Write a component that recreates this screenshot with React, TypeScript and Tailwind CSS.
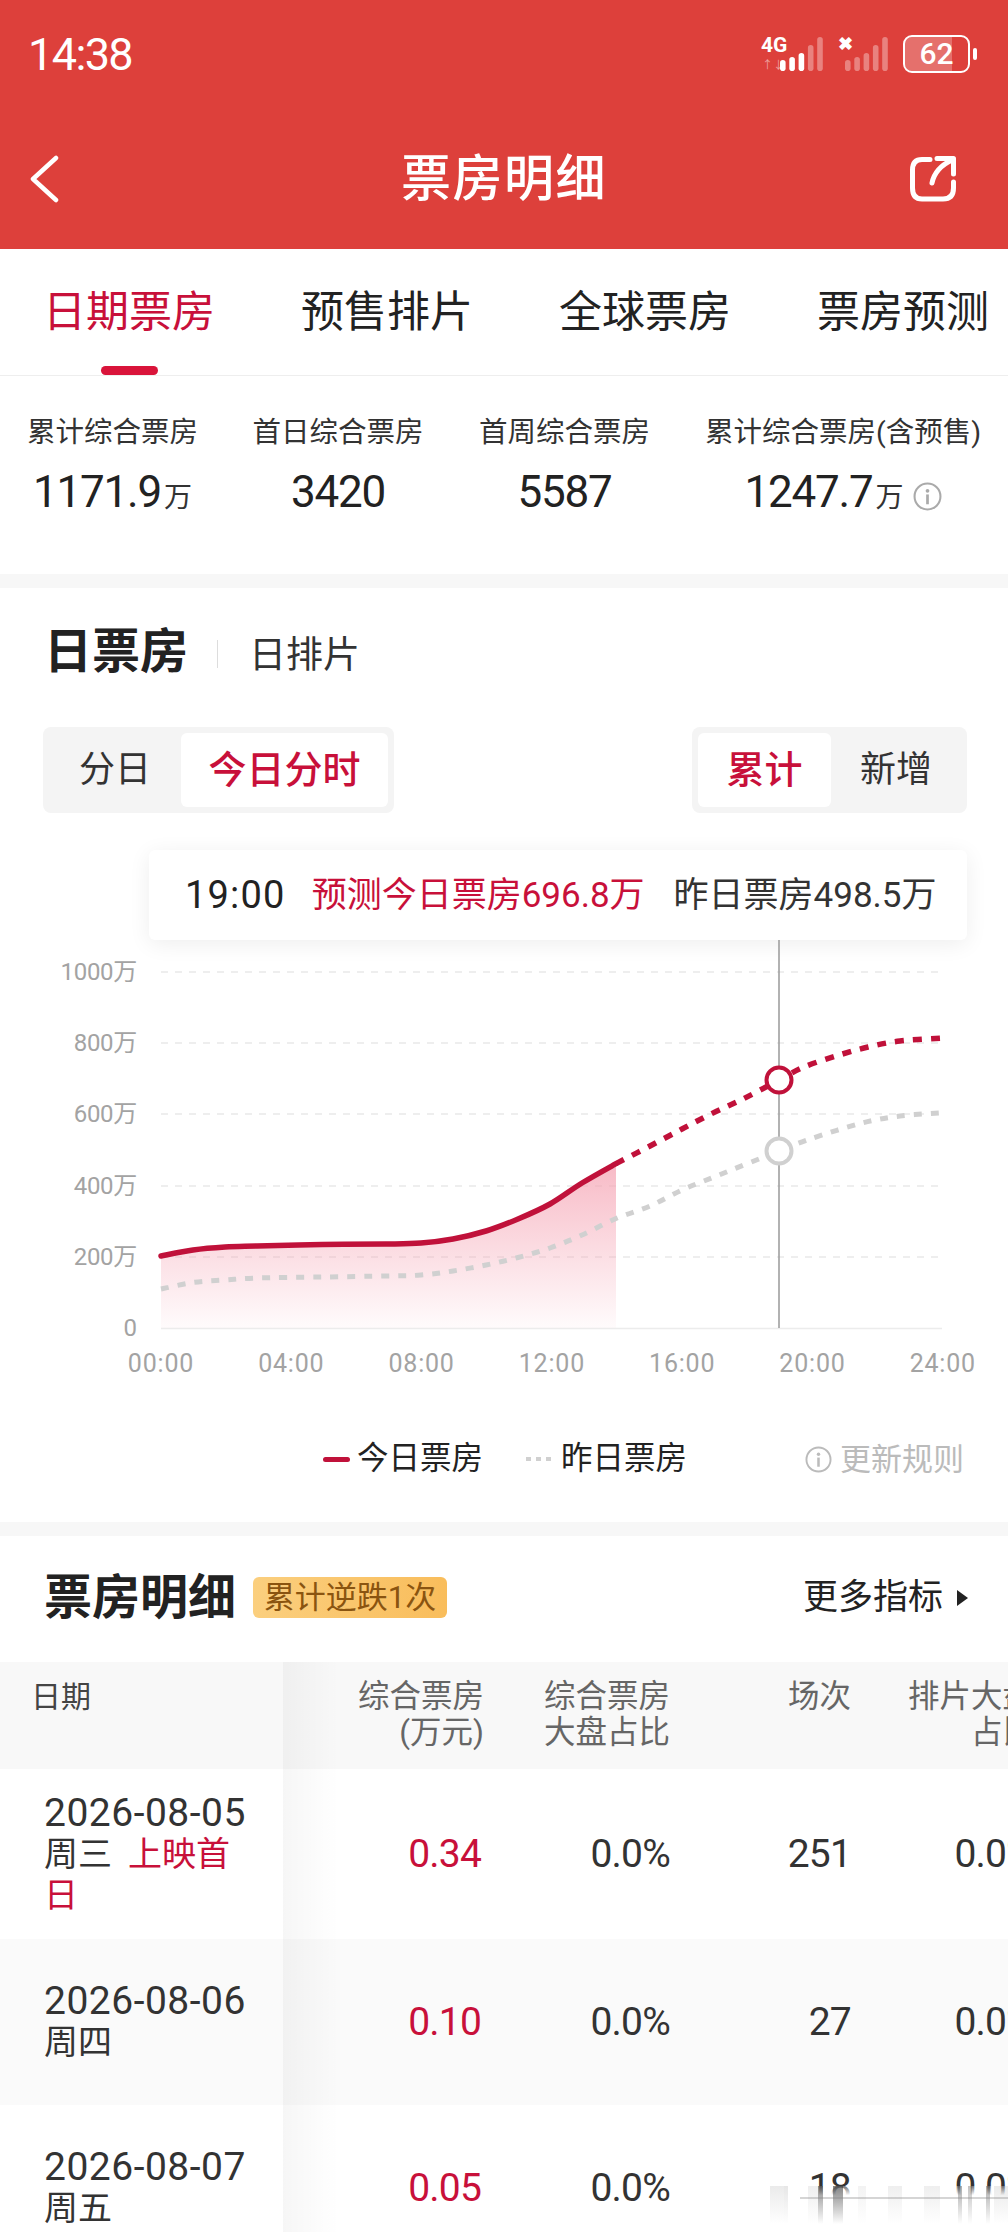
type Pt = [number, number];

const todayReal: Pt[] = [
  [161, 1256], [193, 1250], [225, 1247], [257, 1246], [322, 1244.5], [386, 1244], [421, 1243],
  [453, 1239], [486, 1231], [518, 1219], [550, 1204], [582, 1183], [616, 1163.6],
];
const todayForecast: Pt[] = [
  [616, 1163.6], [650, 1146], [682, 1129], [711, 1114], [743, 1099], [779, 1080], [804, 1067], [836, 1056],
  [868, 1047], [900, 1041], [942, 1038],
];
const yesterday: Pt[] = [
  [161, 1289], [193, 1282.5], [225, 1280], [257, 1278], [322, 1277], [386, 1276], [421, 1275],
  [453, 1271], [486, 1265], [518, 1257.5], [550, 1248], [582, 1235], [616, 1218.5], [650, 1206],
  [682, 1190], [714, 1177], [779, 1151], [810, 1139], [862, 1123], [900, 1116], [939, 1113],
];

const smooth = (pts: Pt[]) => {
  let d = `M${pts[0][0]} ${pts[0][1]}`;
  for (let i = 0; i < pts.length - 1; i++) {
    const p0 = pts[i - 1] ?? pts[i];
    const p1 = pts[i];
    const p2 = pts[i + 1];
    const p3 = pts[i + 2] ?? p2;
    const c1x = p1[0] + (p2[0] - p0[0]) / 6;
    const c1y = p1[1] + (p2[1] - p0[1]) / 6;
    const c2x = p2[0] - (p3[0] - p1[0]) / 6;
    const c2y = p2[1] - (p3[1] - p1[1]) / 6;
    d += ` C${c1x} ${c1y} ${c2x} ${c2y} ${p2[0]} ${p2[1]}`;
  }
  return d;
};

const barHeights = [11, 14, 18, 26, 34];

const Bars = ({ lit }: { lit: number }) => (
  <svg width="43" height="34" viewBox="0 0 43 34" className="block">
    {barHeights.map((h, i) => (
      <rect
        key={i}
        x={i * 9.3}
        y={34 - h}
        width="5.6"
        height={h}
        rx="2.8"
        fill="#fff"
        opacity={i < lit ? 1 : 0.35}
      />
    ))}
  </svg>
);

const StatusBar = () => (
  <div className="flex h-[108px] items-center justify-between pl-7 pr-[31px]">
    <span className="text-[45px] font-normal leading-none tracking-[-1.6px] text-white">14:38</span>
    <div className="flex items-center">
      <div className="relative h-[34px] w-[62px]">
        <span className="absolute left-0 top-[-2px] text-[21px] font-bold leading-none text-white">4G</span>
        <span className="absolute bottom-0 left-[1px] text-[11px] leading-none text-white/50">↑↓</span>
        <div className="absolute bottom-0 right-0">
          <Bars lit={3} />
        </div>
      </div>
      <div className="relative ml-[15px] h-[34px] w-[50px]">
        <span className="absolute left-0 top-[-2px] text-[18px] font-bold leading-none text-white">✖</span>
        <div className="absolute bottom-0 right-0">
          <Bars lit={0} />
        </div>
      </div>
      <div className="ml-[15px] flex items-center">
        <div className="relative flex h-[38px] w-[67px] items-center justify-center overflow-hidden rounded-[9px] border-2 border-white">
          <div className="absolute inset-y-0 left-0 w-[75%] bg-white/25" />
          <span className="relative text-[30px] font-medium leading-none text-white">62</span>
        </div>
        <div className="ml-[3px] h-[12px] w-[4px] rounded-full bg-white" />
      </div>
    </div>
  </div>
);

const NavBar = () => (
  <div className="grid h-[141px] grid-cols-[1fr_auto_1fr] items-center px-[29px]">
    <svg width="30" height="48" viewBox="0 0 30 48" fill="none" stroke="#fff" strokeWidth="4.5" strokeLinecap="round" strokeLinejoin="round">
      <path d="M27 3L4 24L27 45" />
    </svg>
    <h1 className="text-[50px] font-medium leading-none tracking-[1.5px] text-white">票房明细</h1>
    <svg
      width="46"
      height="46"
      viewBox="0 0 46 46"
      fill="none"
      stroke="#fff"
      strokeWidth="5"
      strokeLinecap="round"
      strokeLinejoin="round"
      className="mr-[23px] justify-self-end"
    >
      <path d="M20 3.5H12Q2.5 3.5 2.5 14V32Q2.5 43 12 43H33Q43.5 43 43.5 32V26" />
      <path d="M22 27Q25 12 42 4" />
      <path d="M27 2.5H43.5V18" />
    </svg>
  </div>
);

const tabs = ["日期票房", "预售排片", "全球票房", "票房预测"];

const Tabs = () => (
  <div className="grid h-[127px] w-[1033px] grid-cols-[repeat(4,258px)] border-b border-[#eee]">
    {tabs.map((t, i) => (
      <div key={t} className="relative flex h-[126px] items-start justify-center pt-[33px]">
        <span className={`whitespace-nowrap text-[43px] leading-[60px] ${i === 0 ? "text-[#c8103a]" : "text-[#222]"}`}>{t}</span>
        {i === 0 && <div className="absolute bottom-0 h-[9px] w-[57px] rounded-full bg-[#d9143a]" />}
      </div>
    ))}
  </div>
);

const InfoIcon = ({ size, color }: { size: number; color: string }) => (
  <svg width={size} height={size} viewBox="0 0 28 28" className="shrink-0">
    <circle cx="14" cy="14" r="12.5" fill="none" stroke={color} strokeWidth="2" />
    <circle cx="14" cy="8.5" r="1.8" fill={color} />
    <rect x="12.7" y="12" width="2.6" height="9.5" fill={color} />
  </svg>
);

const Stat = ({ label, value, unit, info }: { label: string; value: string; unit?: string; info?: boolean }) => (
  <div className="flex flex-col items-center">
    <div className="whitespace-nowrap text-[28.5px] leading-[42px] text-[#333]">{label}</div>
    <div className="mt-[13px] flex items-baseline whitespace-nowrap text-[#222]">
      <span className="text-[44px] leading-[50px] tracking-[-1.2px]">{value}</span>
      {unit && <span className="ml-[3px] text-[28px] leading-[50px] text-[#333]">{unit}</span>}
      {info && (
        <span className="ml-[9px] translate-y-[4px]">
          <InfoIcon size={29} color="#aaa" />
        </span>
      )}
    </div>
  </div>
);

const Stats = () => (
  <div className="grid h-[198px] grid-cols-[225px_226px_227px_330px] pt-[36px]">
    <Stat label="累计综合票房" value="1171.9" unit="万" />
    <Stat label="首日综合票房" value="3420" />
    <Stat label="首周综合票房" value="5587" />
    <Stat label="累计综合票房(含预售)" value="1247.7" unit="万" info />
  </div>
);

const Band = () => <div className="h-[14px] bg-[#f7f7f7]" />;

const Seg = ({ items, active, widths }: { items: string[]; active: number; widths: string }) => (
  <div className={`grid h-[86px] rounded-[8px] bg-[#f4f4f4] p-[6px] ${widths}`}>
    {items.map((t, i) => (
      <div
        key={t}
        className={`flex items-center justify-center rounded-[6px] leading-none ${
          i === active ? "bg-white text-[38px] font-medium text-[#c8103a]" : "text-[36px] text-[#333]"
        }`}
      >
        {t}
      </div>
    ))}
  </div>
);

const gridY = [972, 1043, 1114, 1186, 1257];
const yLabels = ["1000万", "800万", "600万", "400万", "200万"];
const xLabels = ["00:00", "04:00", "08:00", "12:00", "16:00", "20:00", "24:00"];

const Chart = () => (
  <svg width="1008" height="440" viewBox="0 940 1008 440" className="block">
    <defs>
      <linearGradient id="area" x1="0" y1="0" x2="0" y2="1">
        <stop offset="0" stopColor="#f5a3b3" stopOpacity="0.75" />
        <stop offset="1" stopColor="#f5a3b3" stopOpacity="0.04" />
      </linearGradient>
    </defs>
    {gridY.map((y) => (
      <line key={y} x1="161" x2="942" y1={y} y2={y} stroke="#e9e9e9" strokeWidth="1.5" strokeDasharray="7 7" />
    ))}
    <line x1="161" x2="942" y1="1328.5" y2="1328.5" stroke="#ececec" strokeWidth="1.5" />
    {gridY.map((y, i) => (
      <text key={y} x="137" y={y + 8} textAnchor="end" fontSize="24" letterSpacing="-0.3" fill="#a3a3a3">
        {yLabels[i]}
      </text>
    ))}
    <text x="137" y="1336" textAnchor="end" fontSize="24" fill="#a3a3a3">0</text>
    {xLabels.map((t, i) => (
      <text key={t} x={161 + i * 130.3} y="1372" textAnchor="middle" fontSize="25" letterSpacing="0.8" fill="#a3a3a3">
        {t}
      </text>
    ))}
    <path d={`${smooth(todayReal)} L616 1328 L161 1328 Z`} fill="url(#area)" />
    <line x1="779" x2="779" y1="940" y2="1328" stroke="#999" strokeWidth="1.5" />
    <path d={smooth(yesterday)} fill="none" stroke="#d0d0d0" strokeWidth="5" strokeDasharray="8 9" />
    <path d={smooth(todayReal)} fill="none" stroke="#c0113a" strokeWidth="5.5" strokeLinecap="round" />
    <path d={smooth(todayForecast)} fill="none" stroke="#c0113a" strokeWidth="5.5" strokeDasharray="9 9" />
    <circle cx="779" cy="1080" r="12.5" fill="#fff" stroke="#c0113a" strokeWidth="4" />
    <circle cx="779" cy="1151" r="12.5" fill="#fff" stroke="#d0d0d0" strokeWidth="4" />
  </svg>
);

const Legend = () => (
  <div className="mt-[49px] flex h-[60px] items-center">
    <div className="ml-[323px] h-[5px] w-[27px] rounded-full bg-[#c0113a]" />
    <span className="ml-[7px] text-[31.5px] leading-none text-[#222]">今日票房</span>
    <svg width="27" height="6" className="ml-[43px]">
      <line x1="0" x2="27" y1="3" y2="3" stroke="#d0d0d0" strokeWidth="4" strokeDasharray="5 5" />
    </svg>
    <span className="ml-[8px] text-[31.5px] leading-none text-[#222]">昨日票房</span>
    <div className="ml-[118px] flex items-center gap-[8px]">
      <InfoIcon size={27} color="#bbb" />
      <span className="text-[31px] leading-none text-[#bbb]">更新规则</span>
    </div>
  </div>
);

const columns = "grid-cols-[283px_201px_186px_181px_183px]";

const Cell = ({ children }: { children: React.ReactNode }) => (
  <div className="flex items-center justify-end whitespace-nowrap text-[39px] leading-none tracking-[-0.8px] text-[#333]">{children}</div>
);

const Shade = () => (
  <div className="pointer-events-none absolute inset-y-0 left-[283px] w-[56px] bg-gradient-to-r from-black/[0.035] to-transparent" />
);

const rows = [
  { date: "2026-08-05", week: "周三", tag: "上映首日", box: "0.34", share: "0.0%", shows: "251", h: "h-[170px]", bg: "bg-white" },
  { date: "2026-08-06", week: "周四", box: "0.10", share: "0.0%", shows: "27", h: "h-[166px]", bg: "bg-[#fafafa]" },
  { date: "2026-08-07", week: "周五", box: "0.05", share: "0.0%", shows: "18", h: "h-[166px]", bg: "bg-white" },
];

const headCell = "whitespace-nowrap text-right text-[31.5px] leading-[36px] text-[#666]";

const Table = () => (
  <div className="w-[1034px]">
    <div className={`relative grid h-[107px] bg-[#f8f8f8] pt-[17px] ${columns}`}>
      <Shade />
      <div className="pl-[31px] text-[30px] leading-[36px] text-[#444]">日期</div>
      <div className={headCell}>综合票房<br />(万元)</div>
      <div className={headCell}>综合票房<br />大盘占比</div>
      <div className={headCell}>场次</div>
      <div className={headCell}>排片大盘<br />占比</div>
    </div>
    {rows.map((r) => (
      <div key={r.date} className={`relative grid ${r.h} ${r.bg} ${columns}`}>
        <Shade />
        <div className="flex flex-col justify-center pl-[44px] pr-[40px] text-[34px] leading-[41px] text-[#333]">
          <div className="whitespace-nowrap text-[39px] tracking-[0.5px]">{r.date}</div>
          <div>
            {r.week}
            {r.tag && <span className="ml-[16px] text-[#c8103a]">{r.tag}</span>}
          </div>
        </div>
        <Cell><span className="pr-[3px] text-[#c8103a]">{r.box}</span></Cell>
        <Cell>{r.share}</Cell>
        <Cell>{r.shows}</Cell>
        <Cell>{r.share}</Cell>
      </div>
    ))}
  </div>
);

const streaks: [number, number, number][] = [
  [770, 14, 0.1], [784, 4, 0.12], [808, 10, 0.08], [818, 5, 0.55], [833, 10, 0.6], [858, 8, 0.06],
  [888, 14, 0.08], [924, 16, 0.08], [958, 4, 0.4], [968, 4, 0.3], [986, 4, 0.4], [994, 14, 0.1],
];

// washed-out reflection lying over the last row, bottom right
const Smudge = () => (
  <svg width="248" height="46" viewBox="0 0 248 46" className="absolute left-[760px] top-[2186px]">
    <defs>
      <linearGradient id="wash" x1="0" y1="0" x2="0" y2="1">
        <stop offset="0" stopColor="#fff" stopOpacity="0.3" />
        <stop offset="0.2" stopColor="#fff" stopOpacity="1" />
        <stop offset="1" stopColor="#fff" stopOpacity="1" />
      </linearGradient>
      <linearGradient id="streak" x1="0" y1="0" x2="0" y2="1">
        <stop offset="0" stopColor="#333" stopOpacity="1" />
        <stop offset="1" stopColor="#333" stopOpacity="0" />
      </linearGradient>
    </defs>
    <rect width="248" height="46" fill="url(#wash)" />
    {streaks.map(([x, w, o]) => (
      <rect key={x} x={x - 760} y="0" width={w} height="38" fill="url(#streak)" opacity={o} />
    ))}
    <rect x="40" y="11" width="208" height="2" fill="#888" opacity="0.35" />
  </svg>
);

export default function App() {
  return (
    <div className="relative h-[2232px] w-[1008px] overflow-hidden bg-white font-['Roboto','Noto_Sans_CJK_SC',sans-serif]">
      <div className="bg-[#dd403b]">
        <StatusBar />
        <NavBar />
      </div>
      <Tabs />
      <Stats />
      <Band />

      <section className="h-[934px]">
        <div className="flex h-[115px] items-end pb-[16px] pl-[44px]">
          <h2 className="text-[48px] font-bold leading-[70px] text-[#222]">日票房</h2>
          <div className="mb-[19px] ml-[29px] h-[28px] w-[1px] bg-[#ddd]" />
          <span className="ml-[31px] translate-y-[1px] text-[37px] leading-[64px] text-[#333]">日排片</span>
        </div>
        <div className="flex justify-between pl-[43px] pr-[41px] pt-[24px]">
          <Seg items={["分日", "今日分时"]} active={1} widths="w-[351px] grid-cols-[132px_1fr]" />
          <Seg items={["累计", "新增"]} active={0} widths="w-[275px] grid-cols-[133px_1fr]" />
        </div>
        <div className="ml-[149px] mr-[41px] mt-[37px] flex h-[90px] items-center rounded-[6px] bg-white pl-[36px] text-[35px] leading-none shadow-[0_4px_22px_rgba(0,0,0,0.07)]">
          <span className="text-[38px] tracking-[1.2px] text-[#222]">19:00</span>
          <span className="ml-[26px] whitespace-nowrap text-[#c8103a]">预测今日票房696.8万</span>
          <span className="ml-[29px] whitespace-nowrap text-[#333]">昨日票房498.5万</span>
        </div>
        <Chart />
        <Legend />
      </section>

      <Band />

      <div className="flex h-[126px] items-center pb-[3px]">
        <h2 className="ml-[44px] text-[48px] font-bold leading-none text-[#222]">票房明细</h2>
        <div className="ml-[17px] flex h-[41px] w-[194px] items-center justify-center rounded-[6px] bg-gradient-to-r from-[#fbcf7e] to-[#f9bd5b] text-[31px] leading-none text-[#8a5410]">
          累计逆跌1次
        </div>
        <span className="ml-[356px] text-[35px] leading-none text-[#222]">更多指标</span>
        <div className="ml-[14px] h-0 w-0 border-y-[8px] border-l-[11px] border-y-transparent border-l-[#222]" />
      </div>
      <Table />
      <Smudge />
    </div>
  );
}
